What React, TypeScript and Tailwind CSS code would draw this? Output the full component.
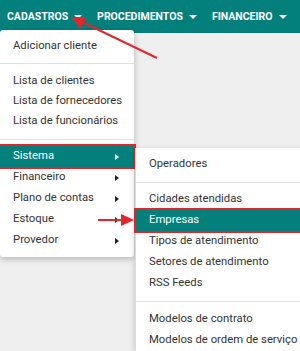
const font = { fontFamily: 'Roboto, "Liberation Sans", sans-serif' }

function Caret() {
  return <span className="ml-[6px] inline-block h-0 w-0 border-x-[4px] border-t-[4px] border-x-transparent border-t-white" />
}

function Chevron({ white }: { white?: boolean }) {
  return (
    <span
      className={
        'inline-block h-0 w-0 border-y-[3.5px] border-l-[4px] border-y-transparent ' +
        (white ? 'border-l-white' : 'border-l-[#222]')
      }
    />
  )
}

function Item({ label, h = 'h-[21px]', sub, active }: { label: string; h?: string; sub?: boolean; active?: boolean }) {
  return (
    <div
      className={
        'relative flex items-center justify-between pl-[13px] pr-[15px] text-[11.3px] ' +
        h +
        (active ? ' bg-[#03807b] text-white outline-2 outline-[#e0262b]' : ' text-[#333]')
      }
    >
      <span className="whitespace-nowrap">{label}</span>
      {sub && <Chevron white={active} />}
    </div>
  )
}

function Divider({ top, bottom }: { top: string; bottom: string }) {
  return <div className={'h-px bg-[#e2e2e2] ' + top + ' ' + bottom} />
}

export default function App() {
  return (
    <div className="relative h-[351px] w-[300px] overflow-hidden bg-[#efefef]" style={font}>
      {/* top bar */}
      <div className="flex h-[33px] items-center bg-[#03807b] pl-[7px] text-[10.5px] font-bold text-white">
        <span className="flex items-center">CADASTROS<Caret /></span>
        <span className="ml-[15px] flex items-center">PROCEDIMENTOS<Caret /></span>
        <span className="ml-[15px] flex items-center">FINANCEIRO<Caret /></span>
      </div>

      {/* dropdown */}
      <div className="absolute left-0 top-[30px] w-[134px] rounded-[3px] bg-white pb-[6px] pt-[6px] shadow-[0_2px_6px_rgba(0,0,0,0.25)]">
        <Item label="Adicionar cliente" />
        <Divider top="mt-[6px]" bottom="mb-[7px]" />
        <Item label="Lista de clientes" h="h-[20px]" />
        <Item label="Lista de fornecedores" h="h-[20px]" />
        <Item label="Lista de funcionários" h="h-[20px]" />
        <Divider top="mt-[8px]" bottom="mb-[6px]" />
        <Item label="Sistema" sub active />
        <Item label="Financeiro" sub />
        <Item label="Plano de contas" sub />
        <Item label="Estoque" sub />
        <Item label="Provedor" sub />
      </div>

      {/* submenu */}
      <div className="absolute left-[135px] top-[148px] w-[180px] border-l border-[#dcdcdc] bg-white pt-[6px] shadow-[0_2px_6px_rgba(0,0,0,0.2)]">
        <Item label="Operadores" />
        <Divider top="mt-[7px]" bottom="mb-[6px]" />
        <Item label="Cidades atendidas" />
        <Item label="Empresas" active />
        <Item label="Tipos de atendimento" />
        <Item label="Setores de atendimento" />
        <Item label="RSS Feeds" />
        <Divider top="mt-[7px]" bottom="mb-[7px]" />
        <Item label="Modelos de contrato" />
        <Item label="Modelos de ordem de serviço" />
      </div>

      {/* arrows */}
      <svg className="pointer-events-none absolute left-0 top-0" width="300" height="351">
        <line x1="157" y1="58" x2="80" y2="21" stroke="#e3262b" strokeWidth="2" />
        <polygon points="71,17 86,17 80,29" fill="#e3262b" />
        <line x1="98" y1="220" x2="124" y2="220" stroke="#e3262b" strokeWidth="2" />
        <polygon points="134,220 121,214 121,226" fill="#e3262b" />
      </svg>
    </div>
  )
}
